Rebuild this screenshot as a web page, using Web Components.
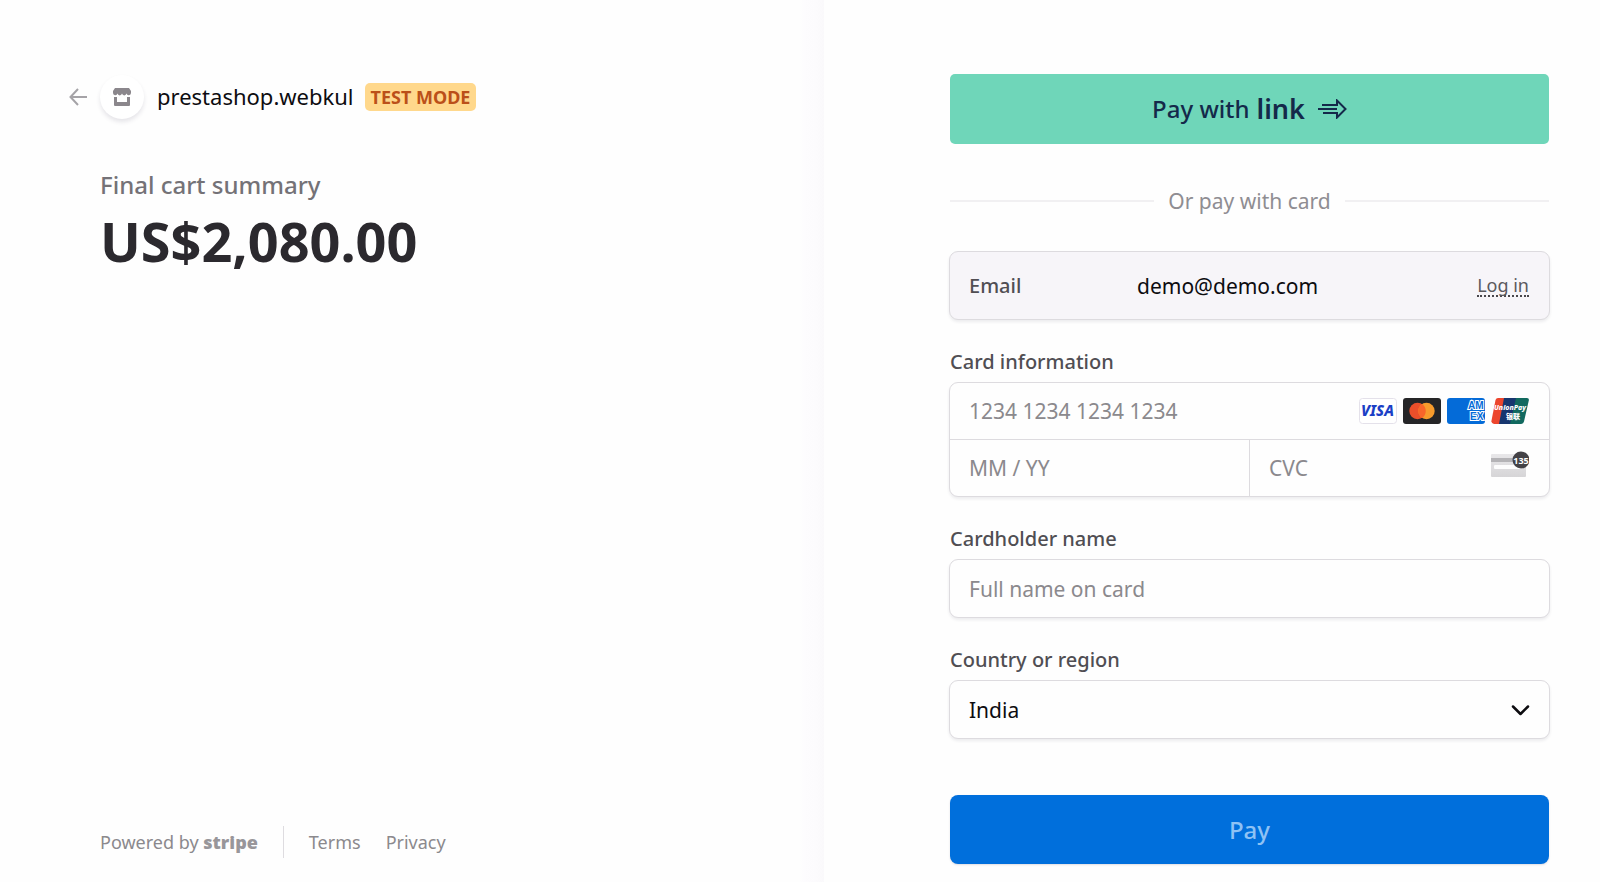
<!DOCTYPE html>
<html lang="en">
<head>
<meta charset="utf-8">
<meta name="viewport" content="width=device-width, initial-scale=1">
<title>Checkout</title>
<style>
  body { margin: 0; background: #fefefe; color: #0d0c10; font-family: "Noto Sans", "Open Sans", sans-serif; }
</style>
</head>
<body>
<checkout-page>
  <merchant-summary slot="summary"></merchant-summary>
  <payment-form slot="form"></payment-form>
</checkout-page>

<script>
const define = (name, html, setup) => {
  const template = document.createElement('template');
  template.innerHTML = html;
  customElements.define(name, class extends HTMLElement {
    constructor() {
      super();
      this.attachShadow({ mode: 'open' }).append(template.content.cloneNode(true));
    }
    connectedCallback() { if (setup) setup(this, this.shadowRoot); }
  });
};

/* Two-column shell */
define('checkout-page', `
  <style>
    :host { display: grid; grid-template-columns: 824fr 776fr; min-height: 100vh; }
    aside, main { display: flex; flex-direction: column; box-sizing: border-box; }
    aside { padding: 75px 40px 24px 69px; background: linear-gradient(to left, #faf9fb 0, #fcfbfd 8px, #fdfcfe 20px, #fefefe 24px); }
    main { padding: 74px 50px 18px 125px; }
    ::slotted(*) { flex: 1; }
  </style>
  <aside><slot name="summary"></slot></aside>
  <main><slot name="form"></slot></main>
`);

define('test-badge', `
  <style>
    :host { display: block; padding: 0 6px; border-radius: 5px; background: #ffd88c; color: #bb5019;
            font-size: 18px; line-height: 28px; font-weight: 700; }
  </style>
  <slot></slot>
`);

define('store-icon', `
  <style>
    :host { display: flex; align-items: center; justify-content: center; width: 44px; height: 44px;
            border-radius: 50%; background: #fff; box-shadow: 0 3px 4px rgba(60, 50, 80, .12); }
  </style>
  <svg width="20" height="20" viewBox="0 0 20 20" fill="#8b878c" aria-hidden="true">
    <path d="M3 1h14l2 3v2a2.3 2.3 0 0 1-4.5.6 2.3 2.3 0 0 1-4.5 0 2.3 2.3 0 0 1-4.5 0A2.3 2.3 0 0 1 1 6V4z"/>
    <path d="M2 10h3v5h10v-5h3v8a1 1 0 0 1-1 1H3a1 1 0 0 1-1-1z"/>
  </svg>
`);

define('merchant-summary', `
  <style>
    :host { display: flex; flex-direction: column; justify-content: space-between; }
    header { display: flex; align-items: center; }
    .back { display: flex; margin-right: 13px; }
    .name { margin: 0 11px 0 13px; padding-bottom: 2px; font-size: 22px; line-height: 28px; font-weight: 400; color: #0d0c10; }
    .total { padding: 50px 0 0 31px; }
    h1, p { margin: 0; }
    h1 { font-size: 24px; line-height: 32px; font-weight: 500; color: #747277; }
    p { margin-top: 10px; font-size: 54px; line-height: 60px; font-weight: 700; color: #2b292e; }
    footer { display: flex; align-items: center; padding-left: 31px; font-size: 18px; line-height: 32px; color: #8b898d; }
    a { color: inherit; text-decoration: none; }
    .powered { padding-right: 25px; border-right: 1px solid #dedce0; margin-right: 25px; }
    .powered b { font-weight: 900; color: #98969a; }
    .terms { margin-right: 25px; }
  </style>
  <div>
    <header>
      <a class="back" href="#back" aria-label="Back">
        <svg width="18" height="18" viewBox="0 0 18 18" fill="none" stroke="#a5a3a7" stroke-width="2"><path d="M9 1 1.5 9 9 17M1.5 9H18"/></svg>
      </a>
      <store-icon></store-icon>
      <h2 class="name">prestashop.webkul</h2>
      <test-badge>TEST MODE</test-badge>
    </header>
    <section class="total">
      <h1>Final cart summary</h1>
      <p>US$2,080.00</p>
    </section>
  </div>
  <footer>
    <a class="powered" href="#stripe">Powered by <b>stripe</b></a>
    <a class="terms" href="#terms">Terms</a>
    <a href="#privacy">Privacy</a>
  </footer>
`);

define('link-button', `
  <style>
    :host { display: block; margin: 0 1px; }
    button { display: flex; align-items: center; justify-content: center; width: 100%; height: 70px; padding: 0;
             border: 0; border-radius: 5px; background: #6fd6b9; color: #14294a; font: 500 24px/32px "Noto Sans", sans-serif; }
    .logo { margin: 0 13px 0 7px; font-size: 27px; font-weight: 600; }
  </style>
  <button type="button">
    <span>Pay with</span><span class="logo">link</span>
    <svg width="29" height="20" viewBox="0 0 29 20" fill="none" stroke="#14294a" stroke-width="2" aria-hidden="true">
      <path d="M4 6h15V1.500l8.500 8.500-8.500 8.500V14H5M0 10h19"/>
    </svg>
  </button>
`);

define('or-divider', `
  <style>
    :host { display: flex; align-items: center; gap: 14px; margin: 43px 1px 36px; font-size: 21px; line-height: 28px; color: #8f8d92; }
    i { flex: 1; height: 2px; background: #f1f0f2; }
  </style>
  <i></i><slot></slot><i></i>
`);

define('email-row', `
  <style>
    :host { display: flex; align-items: center; height: 69px; box-sizing: border-box; padding: 0 20px 0 19px;
            border: 1px solid #dddbdf; border-radius: 9px; background: #f7f5f9; box-shadow: 0 2px 3px rgba(60, 50, 80, .09); }
    label { width: 168px; font-size: 20px; line-height: 28px; font-weight: 500; color: #504e53; }
    input { flex: 1; min-width: 0; padding: 0; border: 0; outline: 0; background: none; color: #0d0c10; font: 21px/28px "Noto Sans", sans-serif; }
    a { color: #5b595e; font-size: 18px; line-height: 20px; text-decoration: none; border-bottom: 2px dotted #49474c; }
  </style>
  <label for="email">Email</label>
  <input id="email" type="email" value="demo@demo.com">
  <a href="#login">Log in</a>
`);

define('card-brands', `
  <style>
    :host { display: flex; gap: 6px; }
    svg { display: block; }
    text { font-family: "Noto Sans", sans-serif; font-weight: 800; }
    .amex text { font-family: "Liberation Sans", sans-serif; font-weight: 700; }
  </style>
  <svg width="38" height="26" viewBox="0 0 38 26">
    <rect x=".5" y=".5" width="37" height="25" rx="3" fill="#fff" stroke="#e4e1ea"/>
    <text x="18.500" y="18" font-size="15" font-style="italic" text-anchor="middle" fill="#1b3fc6">VISA</text>
  </svg>
  <svg width="38" height="26" viewBox="0 0 38 26">
    <rect width="38" height="26" rx="3" fill="#252527"/>
    <circle cx="14.5" cy="13" r="8.2" fill="#eb4f2a"/><circle cx="23.5" cy="13" r="8.2" fill="#f79b2c"/>
    <path d="M19 6.1a8.2 8.2 0 0 1 0 13.8 8.2 8.2 0 0 1 0-13.8z" fill="#f8652a"/>
  </svg>
  <svg class="amex" width="38" height="26" viewBox="0 0 38 26">
    <rect width="38" height="26" rx="3" fill="#046bd8"/>
    <g fill="#046bd8" stroke="#fff" stroke-width="2" paint-order="stroke" font-size="10">
      <text x="21" y="11">AM</text>
      <text x="23" y="22">EX</text>
    </g>
  </svg>
  <svg width="38" height="26" viewBox="0 0 38 26">
    <path d="M7 0h10l-6 26H3a3 3 0 0 1-2.500-3.500L4.500 2A3 3 0 0 1 7 0z" fill="#ec452d"/>
    <path d="M13 0h13l-6 26H8z" fill="#17366f"/>
    <path d="M25 0h11a2 2 0 0 1 1.800 2.500L33 23.500a3 3 0 0 1-3 2.500H19z" fill="#12695f"/>
    <text x="19" y="12" font-size="7" font-style="italic" text-anchor="middle" fill="#fff">UnionPay</text>
    <text x="22" y="21" font-size="7" text-anchor="middle" fill="#fff" style="font-family:'Noto Sans CJK SC',sans-serif">银联</text>
  </svg>
`);

define('cvc-icon', `
  <style>:host, svg { display: block; } text { font-family: "Noto Sans", sans-serif; font-weight: 700; }</style>
  <svg width="38" height="28" viewBox="0 0 38 28">
    <defs><linearGradient id="g" x1="0" x2="0" y1="0" y2="1"><stop offset="0" stop-color="#e8e7e9"/><stop offset="1" stop-color="#d6d5d7"/></linearGradient></defs>
    <rect y="3" width="35" height="23" rx="1" fill="url(#g)"/>
    <rect y="7" width="35" height="4" fill="#b4b3b6"/>
    <rect x="3" y="14" width="29" height="4" rx="1" fill="#fdfdfd"/>
    <circle cx="30" cy="9" r="8.500" fill="#444246"/>
    <text x="30" y="12.500" font-size="9" text-anchor="middle" fill="#fff">135</text>
  </svg>
`);

/* Shared look of labelled controls */
const fieldCss = `
  :host { display: block; margin-top: 30px; }
  fieldset { margin: 0; padding: 0; border: 0; min-width: 0; }
  .label { display: block; padding: 0 0 8px 1px; font-size: 20px; line-height: 24px; font-weight: 500; color: #504e53; }
  .box { display: flex; align-items: center; box-sizing: border-box; border: 1px solid #dddbdf; border-radius: 9px;
         background: #fefefe; box-shadow: 0 2px 3px rgba(60, 50, 80, .09); }
  input, select { flex: 1; width: 100%; min-width: 0; height: 57px; padding: 0 19px; border: 0; outline: 0; background: none;
          color: #0d0c10; font: 21px/28px "Noto Sans", sans-serif; appearance: none; box-sizing: border-box; }
  input::placeholder { color: #8b898d; opacity: 1; }
`;

define('card-field', `
  <style>${fieldCss}
    .box { flex-direction: column; align-items: stretch; }
    .row { display: flex; align-items: center; }
    .row + .row { border-top: 1px solid #dddbdf; }
    .cell { display: flex; flex: 1; align-items: center; min-width: 0; }
    .cell + .cell { border-left: 1px solid #dddbdf; }
    .row input { height: 56px; }
    card-brands, cvc-icon { padding-right: 20px; }
    cvc-icon { padding-bottom: 6px; }
  </style>
  <fieldset>
    <label class="label" for="number">Card information</label>
    <div class="box">
      <div class="row"><input id="number" inputmode="numeric" placeholder="1234 1234 1234 1234"><card-brands></card-brands></div>
      <div class="row">
        <div class="cell"><input aria-label="Expiry" placeholder="MM / YY"></div>
        <div class="cell"><input aria-label="CVC" placeholder="CVC"><cvc-icon></cvc-icon></div>
      </div>
    </div>
  </fieldset>
`);

define('text-field', `
  <style>${fieldCss}</style>
  <label class="label" for="control"></label>
  <div class="box"><input id="control"></div>
`, (host, root) => {
  root.querySelector('label').textContent = host.getAttribute('label');
  root.querySelector('input').placeholder = host.getAttribute('placeholder');
});

define('country-field', `
  <style>${fieldCss}
    .box { display: grid; }
    select, svg { grid-area: 1 / 1; }
    svg { justify-self: end; margin-right: 19px; pointer-events: none; }
  </style>
  <label class="label" for="country">Country or region</label>
  <div class="box">
    <select id="country"><option>India</option></select>
    <svg width="19" height="12" viewBox="0 0 19 12" fill="none" stroke="#0d0c10" stroke-width="2.500" stroke-linecap="round" stroke-linejoin="round"><path d="M2 2.500l7.500 7.500L17 2.500"/></svg>
  </div>
`);

define('pay-button', `
  <style>
    :host { display: block; margin: 56px 1px 0; }
    button { width: 100%; height: 69px; padding: 0; border: 0; border-radius: 8px; background: #006fdc; color: #8fc2f4;
             font: 500 24px/32px "Noto Sans", sans-serif; box-shadow: 0 1px 2px rgba(60, 50, 80, .16); }
  </style>
  <button type="submit"><slot></slot></button>
`);

define('payment-form', `
  <style>:host { display: block; } form { margin: 0; }</style>
  <form>
    <link-button></link-button>
    <or-divider>Or pay with card</or-divider>
    <email-row></email-row>
    <card-field></card-field>
    <text-field label="Cardholder name" placeholder="Full name on card"></text-field>
    <country-field></country-field>
    <pay-button>Pay</pay-button>
  </form>
`);
</script>
</body>
</html>
